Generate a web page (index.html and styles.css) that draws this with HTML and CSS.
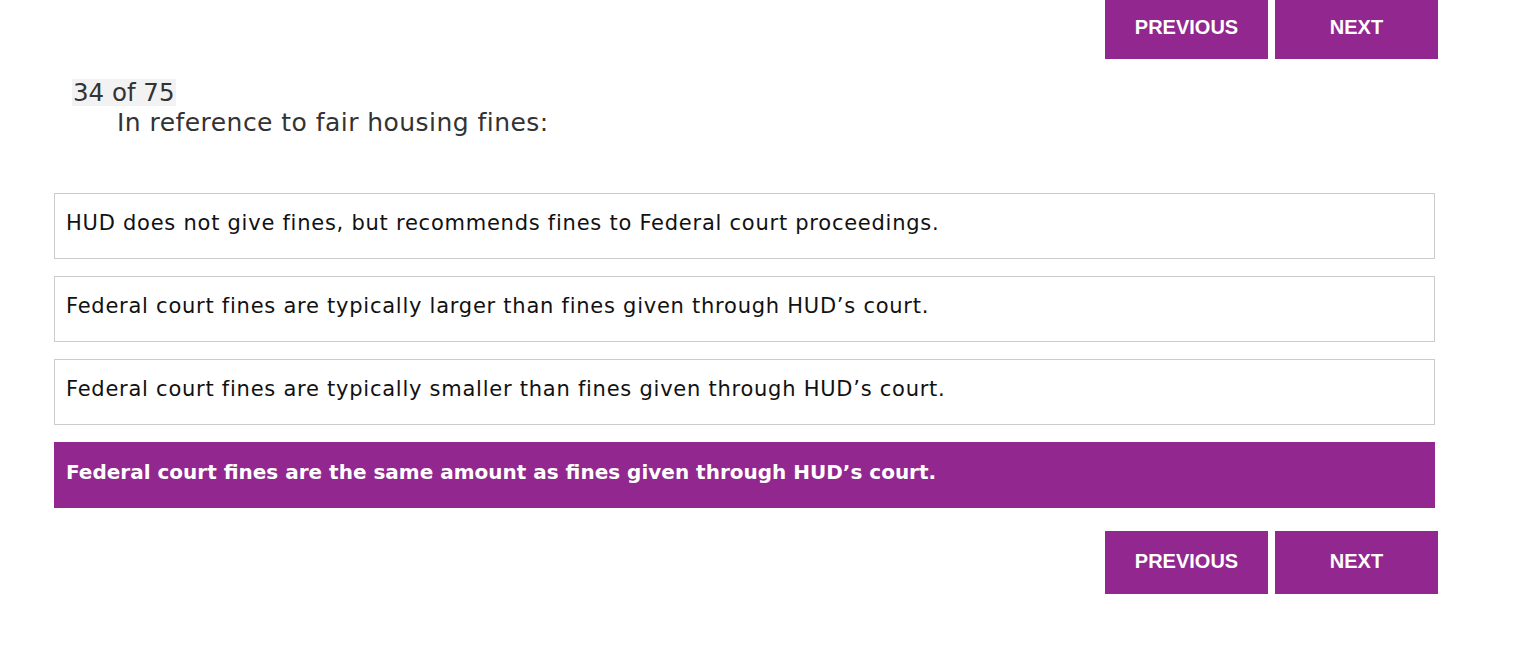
FILE: index.html
```html
<!DOCTYPE html>
<html>
<head>
<meta charset="utf-8">
<link rel="stylesheet" href="styles.css">
</head>
<body>
<div class="page">
  <div class="nav nav-top">
    <button class="btn">PREVIOUS</button>
    <button class="btn">NEXT</button>
  </div>
  <div class="head">
    <span class="counter">34 of 75</span>
    <div class="question">In reference to fair housing fines:</div>
  </div>
  <div class="options">
    <div class="option">HUD does not give fines, but recommends fines to Federal court proceedings.</div>
    <div class="option">Federal court fines are typically larger than fines given through HUD’s court.</div>
    <div class="option">Federal court fines are typically smaller than fines given through HUD’s court.</div>
    <div class="option selected">Federal court fines are the same amount as fines given through HUD’s court.</div>
  </div>
  <div class="nav nav-bottom">
    <button class="btn">PREVIOUS</button>
    <button class="btn">NEXT</button>
  </div>
</div>
</body>
</html>
```
FILE: styles.css
```css
* { box-sizing: border-box; }
html, body { margin: 0; padding: 0; background: #fff; }
body { font-family: "DejaVu Sans", "Open Sans", sans-serif; }
.page { width: 1522px; padding: 0 0 0 54px; }
.nav { display: flex; justify-content: flex-end; gap: 7px; width: 1384px; }
.nav-top .btn { height: 59px; padding-bottom: 5px; }
.nav-bottom { margin-top: 23px; }
.nav-bottom .btn { height: 63px; padding-bottom: 2px; }
.btn {
  width: 163px;
  border: none;
  background: #92278f;
  color: #fff;
  font-family: "Liberation Sans", Arial, sans-serif;
  font-weight: bold;
  font-size: 20px;
  padding: 0;
  cursor: pointer;
}
.head { margin-top: 20px; padding-left: 18px; color: #333; }
.counter { display: inline-block; background: #f2f2f2; font-size: 24.5px; line-height: 27px; padding: 0 1px; }
.question { font-size: 25px; line-height: 30px; padding-top: 2px; padding-left: 45px; letter-spacing: 0.45px; }
.options { margin-top: 55px; display: flex; flex-direction: column; gap: 17px; width: 1381px; }
.option {
  height: 66px;
  border: 1px solid #cccccc;
  display: flex;
  align-items: center;
  padding: 0 11px;
  padding-bottom: 7px;
  font-size: 21px;
  letter-spacing: 0.75px;
  color: #111;
}
.option.selected { background: #92278f; border-color: #92278f; color: #fff; font-weight: bold; letter-spacing: 0; font-size: 20px; }
```
